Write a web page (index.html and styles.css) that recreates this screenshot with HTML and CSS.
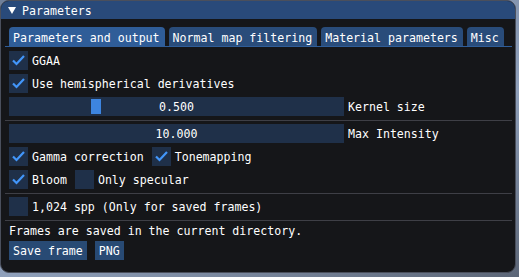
FILE: index.html
```html
<!DOCTYPE html>
<html lang="en">

<head>
    <meta charset="UTF-8">
    <title>Parameters</title>
    <link rel="stylesheet" href="styles.css">
</head>

<body>
    <div class="window">
        <div class="title-bar">
            <span class="collapse-arrow"></span>
            <span class="label">Parameters</span>
        </div>

        <div class="content">
            <div class="tab-bar">
                <div class="tab active">Parameters and output</div>
                <div class="tab">Normal map filtering</div>
                <div class="tab">Material parameters</div>
                <div class="tab">Misc</div>
            </div>

            <div class="row">
                <label class="checkbox">
                    <span class="box"><svg viewBox="0 0 19 19"><path d="M4 9.5 L7.5 13 L15 5" /></svg></span>
                    <span class="label">GGAA</span>
                </label>
            </div>

            <div class="row">
                <label class="checkbox">
                    <span class="box"><svg viewBox="0 0 19 19"><path d="M4 9.5 L7.5 13 L15 5" /></svg></span>
                    <span class="label">Use hemispherical derivatives</span>
                </label>
            </div>

            <div class="row">
                <div class="slider">
                    <div class="grab" style="left: 82px"></div>
                    <span class="label">0.500</span>
                </div>
                <span class="label">Kernel size</span>
            </div>

            <div class="separator"></div>

            <div class="row">
                <div class="slider">
                    <span class="label">10.000</span>
                </div>
                <span class="label">Max Intensity</span>
            </div>

            <div class="row wide">
                <label class="checkbox">
                    <span class="box"><svg viewBox="0 0 19 19"><path d="M4 9.5 L7.5 13 L15 5" /></svg></span>
                    <span class="label">Gamma correction</span>
                </label>
                <label class="checkbox">
                    <span class="box"><svg viewBox="0 0 19 19"><path d="M4 9.5 L7.5 13 L15 5" /></svg></span>
                    <span class="label">Tonemapping</span>
                </label>
            </div>

            <div class="row wide">
                <label class="checkbox">
                    <span class="box"><svg viewBox="0 0 19 19"><path d="M4 9.5 L7.5 13 L15 5" /></svg></span>
                    <span class="label">Bloom</span>
                </label>
                <label class="checkbox">
                    <span class="box"></span>
                    <span class="label">Only specular</span>
                </label>
            </div>

            <div class="separator"></div>

            <div class="row">
                <label class="checkbox">
                    <span class="box"></span>
                    <span class="label">1,024 spp (Only for saved frames)</span>
                </label>
            </div>

            <div class="separator"></div>

            <p class="text">Frames are saved in the current directory.</p>

            <div class="row wide">
                <button class="button"><span class="label">Save frame</span></button>
                <button class="button"><span class="label">PNG</span></button>
            </div>
        </div>
    </div>
</body>

</html>
```

FILE: styles.css
```css
body {
    margin: 0;
    background: linear-gradient(160deg, #6f7f99, #8fa0bb 60%, #5c6677);
    height: 277px;
    font-family: "DejaVu Sans Mono", "Liberation Mono", monospace;
    font-size: 11.6px;
    line-height: 13px;
    color: #ffffff;
}

.window {
    box-sizing: border-box;
    width: 516px;
    height: 273px;
    background: #151619;
    border: 1px solid #4a4f5c;
    border-radius: 9px;
    overflow: hidden;
}

/* text sits a pixel lower in its cell, like the pixel font */
.label {
    padding-top: 2px;
}

.title-bar {
    height: 18px;
    background: #294a7a;
    display: flex;
    align-items: center;
    padding-left: 7px;
}

.collapse-arrow {
    width: 0;
    height: 0;
    border-left: 4px solid transparent;
    border-right: 4px solid transparent;
    border-top: 7px solid #ffffff;
    margin: 1px 6px 0 0;
}

.content {
    padding: 8px;
    display: flex;
    flex-direction: column;
    gap: 4px;
}

/* Tabs */
.tab-bar {
    display: flex;
    gap: 4px;
    border-bottom: 1px solid #2f5d98;
    margin: 0 -5px 0 -4px;
    padding-left: 4px;
}

.tab {
    box-sizing: border-box;
    height: 19px;
    line-height: 20px;
    padding: 1px 5px 0 4px;
    background: #294c7a;
    border-radius: 4px 4px 0 0;
}

.tab.active {
    background: #2f5d98;
}

/* Rows */
.row {
    display: flex;
    align-items: center;
    gap: 4px;
    height: 19px;
}

.row.wide {
    gap: 8px;
}

.checkbox {
    display: flex;
    align-items: center;
    gap: 4px;
}

.box {
    width: 19px;
    height: 19px;
    background: #1f3049;
}

.box svg {
    display: block;
    width: 19px;
    height: 19px;
}

.box svg path {
    fill: none;
    stroke: #4296fa;
    stroke-width: 2.2;
}

/* Sliders */
.slider {
    position: relative;
    width: 335px;
    height: 19px;
    background: #1f3049;
    display: flex;
    align-items: center;
    justify-content: center;
}

.grab {
    position: absolute;
    top: 2px;
    width: 10px;
    height: 15px;
    background: #3d85e0;
}

.slider .label {
    position: relative;
}

.separator {
    height: 1px;
    background: #3e3f46;
    margin: 0 -5px -1px -4px;
}

.text {
    margin: 0;
    height: 13px;
    padding-top: 1px;
    margin-bottom: -1px;
}

.button {
    display: flex;
    align-items: center;
    height: 19px;
    padding: 0 4px;
    border: none;
    background: #284a74;
    color: #ffffff;
    font: inherit;
}
```
